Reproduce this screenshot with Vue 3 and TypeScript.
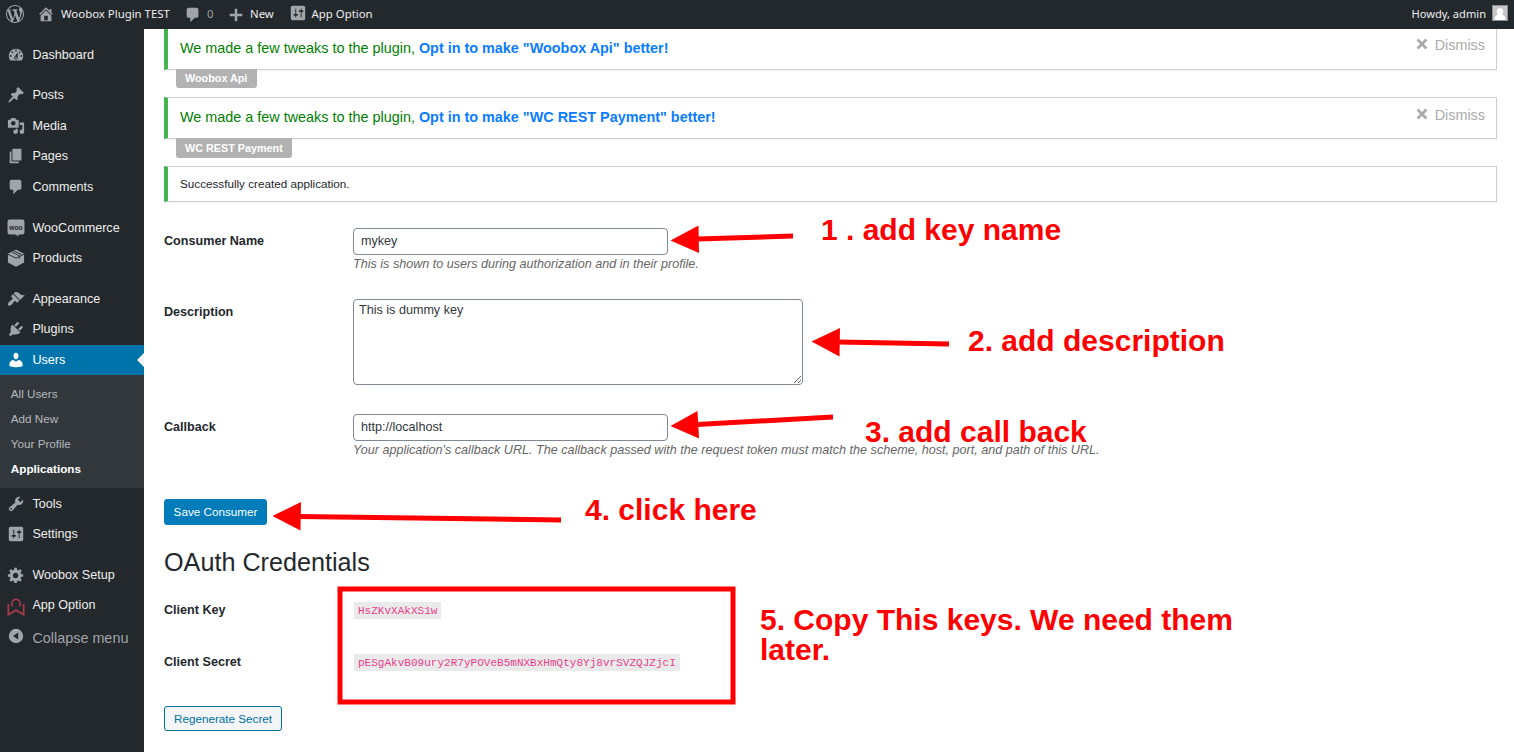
<script setup lang="ts">
interface MenuItem {
  label: string
  icon: string
  current?: boolean
  gap?: boolean
}

const icons: Record<string, string> = {
  wordpress: 'M20 10c0-5.51-4.49-10-10-10C4.48 0 0 4.49 0 10c0 5.52 4.48 10 10 10 5.51 0 10-4.48 10-10zM7.78 15.37L4.37 6.22c.55-.02 1.17-.08 1.17-.08.5-.06.44-1.13-.06-1.11 0 0-1.45.11-2.37.11-.18 0-.37 0-.58-.01C4.12 2.69 6.87 1.11 10 1.11c2.33 0 4.45.87 6.05 2.34-.68-.11-1.65.39-1.65 1.58 0 .74.45 1.36.9 2.1.35.61.55 1.36.55 2.46 0 1.49-1.4 5-1.4 5l-3.03-8.37c.54-.02.82-.17.82-.17.5-.05.44-1.25-.06-1.22 0 0-1.44.12-2.38.12-.87 0-2.33-.12-2.33-.12-.5-.03-.56 1.2-.06 1.22l.92.08 1.26 3.41zM17.41 10c.24-.64.74-1.87.43-4.25.7 1.29 1.05 2.71 1.05 4.25 0 3.29-1.73 6.24-4.4 7.78.97-2.59 1.94-5.2 2.92-7.78zM6.1 18.09C3.12 16.65 1.11 13.53 1.11 10c0-1.3.23-2.48.72-3.59C3.25 10.3 4.67 14.2 6.1 18.09zm4.03-6.63l2.58 6.98c-.86.29-1.76.45-2.71.45-.79 0-1.57-.11-2.29-.33.81-2.38 1.62-4.74 2.42-7.1z',
  home: 'M16 8.5l1.53 1.53-1.06 1.06L10 4.6l-6.47 6.49-1.06-1.06L10 2.5l4 4v-2h2v4zm-6-2.46l6 5.99V18H4v-5.97zM12 17v-5H8v5h4z',
  comments: 'M5 2h9c1.1 0 2 .9 2 2v7c0 1.1-.9 2-2 2h-2l-5 5v-5H5c-1.1 0-2-.9-2-2V4c0-1.1.9-2 2-2z',
  plus: 'M17 8.6v2.8h-5.6V17H8.6v-5.6H3V8.6h5.6V3h2.8v5.6z',
  settings: 'M18 16V4c0-1.1-.9-2-2-2H4c-1.1 0-2 .9-2 2v12c0 1.1.9 2 2 2h12c1.1 0 2-.9 2-2zM8 11h1c.55 0 1 .45 1 1s-.45 1-1 1H8v1.5c0 .28-.22.5-.5.5s-.5-.22-.5-.5V13H6c-.55 0-1-.45-1-1s.45-1 1-1h1V5.5c0-.28.22-.5.5-.5s.5.22.5.5V11zm5-2h-1c-.55 0-1-.45-1-1s.45-1 1-1h1V5.5c0-.28.22-.5.5-.5s.5.22.5.5V7h1c.55 0 1 .45 1 1s-.45 1-1 1h-1v5.5c0 .28-.22.5-.5.5s-.5-.22-.5-.5V9z',
  dashboard: 'M3.76 16h12.48c1.1-1.37 1.76-3.11 1.76-5 0-4.42-3.58-8-8-8s-8 3.58-8 8c0 1.89.66 3.63 1.76 5zM10 4c.55 0 1 .45 1 1s-.45 1-1 1-1-.45-1-1 .45-1 1-1zM6 6c.55 0 1 .45 1 1s-.45 1-1 1-1-.45-1-1 .45-1 1-1zm8 0c.55 0 1 .45 1 1s-.45 1-1 1-1-.45-1-1 .45-1 1-1zm-5.37 5.55L12 7v6c0 1.1-.9 2-2 2s-2-.9-2-2c0-.57.24-1.08.63-1.45zM4 10c.55 0 1 .45 1 1s-.45 1-1 1-1-.45-1-1 .45-1 1-1zm12 0c.55 0 1 .45 1 1s-.45 1-1 1-1-.45-1-1 .45-1 1-1zm-5 3c0-.55-.45-1-1-1s-1 .45-1 1 .45 1 1 1 1-.45 1-1z',
  posts: 'M10.44 3.02l1.82-1.82 6.36 6.35-1.83 1.82c-1.05-.68-2.48-.57-3.41.36l-.75.75c-.92.93-1.04 2.35-.35 3.41l-1.83 1.82-2.41-2.41-2.8 2.79c-.42.42-3.38 2.71-3.8 2.29s1.86-3.39 2.28-3.81l2.79-2.79L4.1 9.36l1.83-1.82c1.05.69 2.48.57 3.4-.36l.75-.75c.93-.92 1.05-2.35.36-3.41z',
  media: 'M13 11V4c0-.55-.45-1-1-1h-1.67L9 1H5L3.67 3H2c-.55 0-1 .45-1 1v7c0 .55.45 1 1 1h10c.55 0 1-.45 1-1zM7 4.5c1.38 0 2.5 1.12 2.5 2.5S8.38 9.5 7 9.5 4.5 8.38 4.5 7 5.62 4.5 7 4.5zM14 6h5v10.5c0 1.38-1.12 2.5-2.5 2.5S14 17.88 14 16.5s1.12-2.5 2.5-2.5c.17 0 .34.02.5.05V9h-3V6zm-4 8.05V13h2v3.5c0 1.38-1.12 2.5-2.5 2.5S7 17.88 7 16.5 8.12 14 9.5 14c.17 0 .34.02.5.05z',
  pages: 'M6 15V2h10v13H6zm-1 1h8v2H3V5h2v11z',
  products: 'M10 .6L19 5.2v9.8l-9 4.6-9-4.6V5.2z',
  appearance: 'M14.48 11.06L7.41 3.99l1.5-1.5c.5-.56 2.3-.47 3.51.32 1.21.8 1.43 1.28 2.91 2.1 1.18.64 2.45 1.26 4.45.85zm-.71.71L6.7 4.7 4.93 6.47c-.39.39-.39 1.02 0 1.41l1.06 1.06c.39.39.39 1.03 0 1.42-.6.6-1.43 1.11-2.21 1.69-.35.26-.7.53-1.01.84C1.43 14.23.4 16.08 1.4 17.07c.99 1 2.84-.03 4.18-1.36.31-.31.58-.66.85-1.02.57-.78 1.08-1.61 1.69-2.21.39-.39 1.02-.39 1.41 0l1.06 1.06c.39.39 1.02.39 1.41 0z',
  plugins: 'M13.11 4.36L9.87 7.6 8 5.73l3.24-3.24c.35-.34 1.05-.2 1.56.32.52.51.66 1.21.31 1.55zm-8 1.77l.91-1.12 9.01 9.01-1.19.84c-.71.71-2.63 1.16-3.82 1.16H6.14L4.9 17.26c-.59.59-1.54.59-2.12 0-.59-.58-.59-1.53 0-2.12l1.24-1.24v-3.88c0-1.13.4-3.19 1.09-3.89zm7.26 3.97l3.24-3.24c.34-.35 1.04-.21 1.55.31.52.51.66 1.21.31 1.55l-3.24 3.25z',
  users: 'M10 9.25c-2.27 0-2.73-3.44-2.73-3.44C7 4.02 7.82 2 9.97 2c2.16 0 2.98 2.02 2.71 3.81 0 0-.41 3.44-2.68 3.44zm0 2.57L12.72 10c2.39 0 4.52 2.33 4.52 4.53v2.49s-3.65 1.13-7.24 1.13c-3.65 0-7.24-1.13-7.24-1.13v-2.49c0-2.25 1.94-4.48 4.47-4.48z',
  tools: 'M16.68 9.77c-1.34 1.34-3.3 1.67-4.95.99l-5.41 6.52c-.99.99-2.59.99-3.58 0s-.99-2.59 0-3.57l6.52-5.42c-.68-1.65-.35-3.61.99-4.95 1.28-1.28 3.12-1.62 4.72-1.06l-2.89 2.89 2.82 2.82 2.86-2.87c.53 1.58.18 3.39-1.08 4.65zM3.81 16.21c.4.39 1.04.39 1.43 0 .4-.4.4-1.04 0-1.43-.39-.4-1.03-.4-1.43 0-.39.39-.39 1.03 0 1.43z',
  generic: 'M18 12h-2.18c-.17.7-.44 1.35-.81 1.93l1.54 1.54-2.1 2.1-1.54-1.54c-.58.36-1.23.63-1.91.79V19H8v-2.18c-.68-.16-1.33-.43-1.91-.79l-1.54 1.54-2.12-2.12 1.54-1.54c-.36-.58-.63-1.23-.79-1.91H1V9.03h2.17c.16-.7.44-1.35.8-1.94L2.43 5.55l2.1-2.1 1.54 1.54c.58-.37 1.24-.64 1.93-.81V2h3v2.18c.68.16 1.33.43 1.91.79l1.54-1.54 2.12 2.12-1.54 1.54c.36.59.64 1.24.8 1.94H18V12zm-8.5 1.5c1.66 0 3-1.34 3-3s-1.34-3-3-3-3 1.34-3 3 1.34 3 3 3z',
  collapse: 'M10 2a8 8 0 1 0 0 16 8 8 0 0 0 0-16zM12.5 6v8L6.7 10z',
  woo: 'M3 .5h14a2.4 2.4 0 0 1 2.4 2.4v12a2.4 2.4 0 0 1-2.4 2.4h-4.5l.5 2.2-3.5-2.2H3A2.4 2.4 0 0 1 .6 14.9v-12A2.4 2.4 0 0 1 3 .5z',
}

const topMenu: MenuItem[] = [
  { label: 'Dashboard', icon: 'dashboard', gap: true },
  { label: 'Posts', icon: 'posts' },
  { label: 'Media', icon: 'media' },
  { label: 'Pages', icon: 'pages' },
  { label: 'Comments', icon: 'comments', gap: true },
  { label: 'WooCommerce', icon: 'woo' },
  { label: 'Products', icon: 'products', gap: true },
  { label: 'Appearance', icon: 'appearance' },
  { label: 'Plugins', icon: 'plugins' },
  { label: 'Users', icon: 'users', current: true },
]
const submenu = ['All Users', 'Add New', 'Your Profile', 'Applications']
const bottomMenu: MenuItem[] = [
  { label: 'Tools', icon: 'tools' },
  { label: 'Settings', icon: 'settings', gap: true },
  { label: 'Woobox Setup', icon: 'generic' },
  { label: 'App Option', icon: 'app' },
]
const notices = ['Woobox Api', 'WC REST Payment']

const consumer = 'mykey'
const description = 'This is dummy key'
const callback = 'http://localhost'
</script>

<template>
  <div class="page">
    <header class="bar">
      <svg class="wp" viewBox="0 0 20 20"><path :d="icons.wordpress" /></svg>
      <svg class="home" viewBox="0 0 20 20"><path fill-rule="evenodd" :d="icons.home" /></svg>
      <span class="site">Woobox Plugin TEST</span>
      <svg class="bubble" viewBox="0 0 20 20"><path :d="icons.comments" /></svg>
      <span class="count">0</span>
      <svg class="plus" viewBox="0 0 20 20"><path :d="icons.plus" /></svg>
      <span class="new">New</span>
      <svg class="opt" viewBox="0 0 20 20"><path fill-rule="evenodd" :d="icons.settings" /></svg>
      <span class="option">App Option</span>
      <span class="howdy">Howdy, admin</span>
      <svg class="avatar" viewBox="0 0 16 16">
        <rect width="16" height="16" fill="#8c8f94" />
        <rect x="1" y="1" width="14" height="14" fill="#c5c5c5" />
        <path fill="#fff" d="M8 3c2 0 3.300 1.400 3.300 3.200 0 1.500-.6 2.600-1.300 3.300 1.800.7 3.400 1.800 3.600 5.500H2.400c.2-3.700 1.800-4.800 3.600-5.500-.7-.7-1.300-1.800-1.300-3.300C4.700 4.400 6 3 8 3z" />
      </svg>
    </header>

    <div class="body">
      <nav class="side">
        <div v-for="m in topMenu" :key="m.label" class="item" :class="{ current: m.current, gap: m.gap }">
          <svg viewBox="0 0 20 20">
            <path fill-rule="evenodd" :d="icons[m.icon]" />
            <text v-if="m.icon === 'woo'" x="2.600" y="11.800" textLength="14.800" lengthAdjust="spacingAndGlyphs" class="woo">woo</text>
            <path v-if="m.icon === 'products'" class="seam" d="M.8 5.700L10 10.200l9.200-4.500M5.200 3.200l8.600 4.300v3M7.500 2l8.800 4.300" />
          </svg>
          <span>{{ m.label }}</span>
        </div>
        <div class="sub">
          <div v-for="s in submenu" :key="s" :class="{ on: s === 'Applications' }">{{ s }}</div>
        </div>
        <div v-for="m in bottomMenu" :key="m.label" class="item" :class="{ gap: m.gap }">
          <svg v-if="m.icon === 'app'" viewBox="0 0 20 20" class="app">
            <path d="M1.500 6.500v12L10 13.500l8.500 5V6.500M5.500 9.500V6a4.500 4.500 0 0 1 9 0v3.500" />
          </svg>
          <svg v-else viewBox="0 0 20 20"><path fill-rule="evenodd" :d="icons[m.icon]" /></svg>
          <span>{{ m.label }}</span>
        </div>
        <div class="item collapse">
          <svg viewBox="0 0 20 20"><path fill-rule="evenodd" :d="icons.collapse" /></svg>
          <span>Collapse menu</span>
        </div>
      </nav>

      <main class="main">
        <div v-for="n in notices" :key="n" class="notice">
          <p>We made a few tweaks to the plugin, <b>Opt in to make "{{ n }}" better!</b></p>
          <div class="dismiss">
            <svg viewBox="0 0 10 10"><path d="M1.300 1.300l7.400 7.400M8.700 1.300L1.300 8.700" /></svg>
            <span>Dismiss</span>
          </div>
          <span class="tag">{{ n }}</span>
        </div>
        <div class="notice done">Successfully created application.</div>

        <section class="form">
          <div class="row r1">
            <label>Consumer Name</label>
            <div>
              <div class="input">{{ consumer }}</div>
              <p>This is shown to users during authorization and in their profile.</p>
            </div>
          </div>
          <div class="row r2">
            <label>Description</label>
            <textarea :value="description"></textarea>
          </div>
          <div class="row r3">
            <label>Callback</label>
            <div>
              <div class="input">{{ callback }}</div>
              <p>Your application's callback URL. The callback passed with the request token must match the scheme, host, port, and path of this URL.</p>
            </div>
          </div>
          <button class="save">Save Consumer</button>
        </section>

        <h2>OAuth Credentials</h2>
        <div class="cred"><label>Client Key</label><code>HsZKvXAkXS1w</code></div>
        <div class="cred"><label>Client Secret</label><code>pESgAkvB09ury2R7yPOVeB5mNXBxHmQty8Yj8vrSVZQJZjcI</code></div>
        <button class="regen">Regenerate Secret</button>
      </main>
    </div>

    <svg class="notes" viewBox="0 0 1514 752">
      <g class="lines">
        <path d="M697 239l96-3M838 342l111 2M697 424.500l136-7.500M299 516.500l262 3.500" />
        <rect x="340" y="589" width="393" height="113" />
      </g>
      <path d="M670.500 240.500L698.500 225.500 699 253zM811.500 341.500L840 328 839.500 356.500zM670.500 426L697.500 411 699 438.500zM272.500 516L301 502 300.500 530.500z" />
      <text x="821" y="240">1 . add key name</text>
      <text x="968" y="351">2. add description</text>
      <text x="865" y="442">3. add call back</text>
      <text x="585" y="520">4. click here</text>
      <text x="760" y="630">5. Copy This keys. We need them</text>
      <text x="760" y="660">later.</text>
    </svg>
  </div>
</template>

<style>
html, body { margin: 0; overflow: hidden; }
</style>

<style scoped>
.page {
  position: relative;
  width: 1514px;
  height: 752px;
  overflow: hidden;
  background: #fff;
  color: #23282d;
  font-family: "Liberation Sans", Arial, sans-serif;
  font-size: 12.6px;
}
.page * { box-sizing: border-box; }
.bar {
  position: relative;
  z-index: 2;
  display: flex;
  align-items: center;
  height: 29px;
  padding: 0 6px 2px;
  background: #23282d;
  color: #eee;
  font-family: "Noto Sans", "Open Sans", sans-serif;
  font-size: 11.4px;
  line-height: 26px;
  white-space: nowrap;
}
.bar svg { width: 18px; height: 18px; fill: #a0a5aa; flex: none; }
.bar span { flex: none; }
.bar .wp { margin-right: 13px; }
.bar .home { margin-right: 6px; }
.bar .site { width: 123px; }
.bar .bubble { margin-right: 5px; margin-top: 2px; }
.bar .count { width: 20px; color: #9ca1a6; }
.bar .plus { margin-right: 5px; margin-top: 2px; }
.bar .new { width: 39px; }
.bar .opt { margin-right: 4.5px; margin-top: -1px; }
.bar .option { flex: 1; }
.bar .howdy { margin-right: 6px; font-size: 11.1px; }
.bar .avatar { width: 16px; height: 16px; margin-top: -1px; }

.body { display: flex; height: 723px; }
.side { width: 144px; padding-top: 10.3px; background: #23282d; flex: none; }
.item {
  position: relative;
  display: flex;
  align-items: center;
  height: 30.6px;
  padding-left: 7px;
  color: #eee;
  white-space: nowrap;
}
.item svg { width: 18px; height: 18px; margin-right: 7.4px; fill: #a0a5aa; flex: none; }
.item.gap { margin-bottom: 10px; }
.item.current { background: #0073aa; color: #fff; }
.item.current svg { fill: #fff; }
.item.current::after {
  content: "";
  position: absolute;
  right: 0;
  top: 8px;
  border: 7.2px solid transparent;
  border-left: 0;
  border-right-color: #f1f1f1;
}
.item .woo { fill: #23282d; font: bold 9px "Liberation Sans", sans-serif; }
.item .seam { fill: none; stroke: #23282d; stroke-width: 1; }
.item svg.app { fill: none; stroke: #a03a48; stroke-width: 2; margin-top: 4px; }
.item.collapse { color: #a0a5aa; font-size: 14.4px; }
.item.collapse span { margin-top: 4px; }
.sub {
  padding: 5.5px 0 7.5px 10.8px;
  background: #32373c;
  color: #b4b9be;
  font-size: 11.7px;
  line-height: 25px;
}
.sub .on { color: #fff; font-weight: 700; }

.main { flex: 1; padding: 0 17px 0 20px; margin-top: -1px; }
.notice {
  position: relative;
  display: flex;
  justify-content: space-between;
  height: 42px;
  margin-bottom: 27px;
  border: 1px solid #ccd0d4;
  border-left: 4px solid #46b450;
  padding: 0 11px 0 12px;
  box-shadow: 0 1px 1px rgba(0, 0, 0, .04);
  font-size: 14.4px;
}
.notice p { margin: 0; line-height: 39px; color: green; }
.notice b { color: #0a7cff; }
.dismiss { display: flex; height: 34px; align-items: center; color: #aaa; }
.notice:first-child .dismiss { height: 32px; }
.dismiss svg { width: 12px; height: 12px; margin: -2px 7px 0 0; stroke: #aaa; stroke-width: 2.3; }
.tag {
  position: absolute;
  left: 8px;
  top: 40px;
  height: 20px;
  padding: 0 9px;
  border-radius: 0 0 3px 3px;
  background: #b2b2b2;
  color: #fff;
  font-size: 10.8px;
  font-weight: 700;
  line-height: 20px;
}
.notice:first-child .tag { height: 19px; padding: 0 9.5px 0 9px; line-height: 19px; }
.notice.done { height: 36px; margin-bottom: 26px; font-size: 11.7px; line-height: 34px; }

.row { display: flex; }
.row label, .cred label { width: 189px; flex: none; font-weight: 700; }
.row label { line-height: 26px; }
.r1 { height: 71px; }
.r2 { height: 115px; }
.r3 { height: 85px; }
.row p { margin: 0; font-style: italic; color: #666; line-height: 18px; white-space: nowrap; }
.input {
  width: 315px;
  height: 27px;
  padding: 0 7px;
  border: 1px solid #7e8993;
  border-radius: 4px;
  color: #32373c;
  line-height: 25px;
}
textarea {
  width: 450px;
  height: 86px;
  margin: 0;
  padding: 1.8px 5px;
  border: 1px solid #7e8993;
  border-radius: 4px;
  outline: 0;
  color: #32373c;
  background: #fff;
  font: 12.6px/17px "Liberation Sans", sans-serif;
}
button { display: block; padding: 0; border-radius: 3px; font: 11.7px "Liberation Sans", sans-serif; }
.save { width: 103px; height: 26px; padding-bottom: 1px; border: 1px solid #007cba; background: #007cba; color: #fff; }
h2 { margin: 22px 0 21px; font-size: 25.2px; font-weight: 400; line-height: 31px; }
.cred { display: flex; align-items: flex-start; height: 52px; padding-top: 3px; }
.cred label { width: 190px; padding-top: 1px; line-height: 15px; }
code {
  height: 17px;
  padding: 1px 4px 0;
  background: #eaeaea;
  color: #e83e8c;
  font: 11.04px/17px "Liberation Mono", monospace;
}
.regen { width: 118px; height: 25px; margin-top: 3px; border: 1px solid #0071a1; background: #f3f5f6; color: #0071a1; }

.notes { position: absolute; left: 0; top: 0; z-index: 3; width: 1514px; height: 752px; fill: #f00; pointer-events: none; }
.notes .lines { fill: none; stroke: #f00; stroke-width: 5; }
.notes text { font: bold 30px "Liberation Sans", sans-serif; }
</style>
